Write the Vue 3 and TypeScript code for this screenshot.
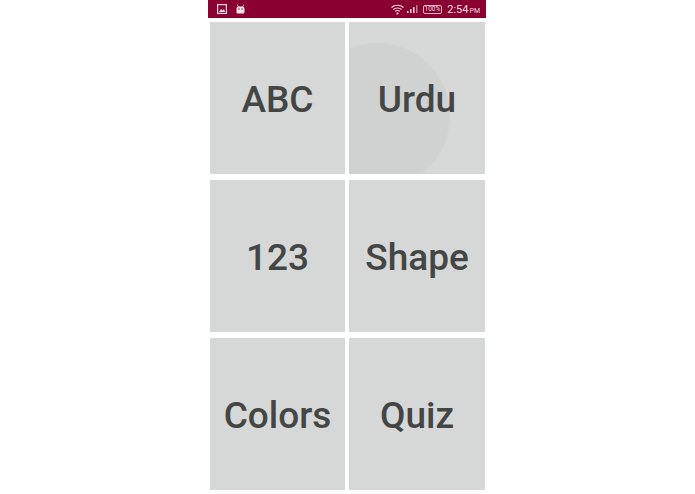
<script setup lang="ts">
const tiles: string[] = ['ABC', 'Urdu', '123', 'Shape', 'Colors', 'Quiz']
</script>

<template>
  <div class="page">
    <div class="phone">
      <div class="status">
        <div class="left">
          <svg class="ic" width="10" height="10" viewBox="0 0 10 10">
            <rect x="0.6" y="0.6" width="8.8" height="8.8" fill="none" stroke="#f1d9e0" stroke-width="1.2" />
            <path d="M2 8l2-3 1.5 1.5L7 5l1 3z" fill="#f1d9e0" />
          </svg>
          <svg class="ic bot" width="11" height="11" viewBox="0 0 11 11">
            <path d="M2.5 0.5l1.2 2h3.6l1.2-2 .5.3-.9 1.9c.9.4 1.4 1.1 1.4 2.1v3.2c0 1-.8 1.5-1.6 1.5H3.1c-.8 0-1.6-.5-1.6-1.5V4.800c0-1 .5-1.7 1.400-2.100L2 .8z" fill="#f7e6eb" />
            <circle cx="4" cy="5" r=".7" fill="#8a0031" />
            <circle cx="7" cy="5" r=".7" fill="#8a0031" />
          </svg>
        </div>
        <div class="right">
          <svg width="13" height="11" viewBox="0 0 13 11" class="wifi">
            <path d="M.5 3.500C3.800.5 9.200.5 12.500 3.500" fill="none" stroke="#f4dfe5" stroke-width="1.200" />
            <path d="M2.400 5.500C4.600 3.500 8.400 3.500 10.600 5.500" fill="none" stroke="#f4dfe5" stroke-width="1.200" />
            <path d="M4.200 7.400C5.400 6.300 7.600 6.300 8.800 7.400" fill="none" stroke="#f4dfe5" stroke-width="1.200" />
            <circle cx="6.500" cy="9.500" r="1.100" fill="#f4dfe5" />
          </svg>
          <svg width="11" height="8" viewBox="0 0 11 8" class="signal">
            <rect x="0" y="6" width="1.500" height="2" fill="#f4dfe5" />
            <rect x="3" y="4" width="1.500" height="4" fill="#f4dfe5" />
            <rect x="6" y="2" width="1.500" height="6" fill="#f4dfe5" />
            <rect x="9" y="0" width="1.500" height="8" fill="#c08096" />
          </svg>
          <span class="battery">100%</span>
          <span class="time">2:54<small>PM</small></span>
        </div>
      </div>
      <div class="grid">
        <div v-for="(t, i) in tiles" :key="t" class="tile">
          <span v-if="i === 1" class="ripple"></span>
          <span class="label">{{ t }}</span>
        </div>
      </div>
    </div>
  </div>
</template>

<style scoped>
.page {
  width: 695px;
  height: 494px;
  background: #fff;
  overflow: hidden;
}
.phone {
  width: 278px;
  margin-left: 208px;
  font-family: Roboto, sans-serif;
}
.status {
  height: 18px;
  background: #8a0031;
  display: flex;
  align-items: center;
  justify-content: space-between;
  padding: 0 6px 0 9px;
  color: #f4dfe5;
}
.left {
  display: flex;
  align-items: center;
  gap: 8px;
}
.right {
  display: flex;
  align-items: center;
}
.wifi {
  margin-right: 3px;
}
.signal {
  margin-right: 5px;
}
.battery {
  font-size: 6.500px;
  line-height: 7px;
  border: 1px solid #e3bcc9;
  border-radius: 2px;
  padding: 0 1px;
  margin-right: 5px;
}
.time {
  font-size: 11px;
  font-weight: 400;
  white-space: nowrap;
}
.time small {
  font-size: 7px;
  margin-left: 1px;
}
.grid {
  display: grid;
  grid-template-columns: 135px 136px;
  grid-auto-rows: 152px;
  column-gap: 4px;
  row-gap: 6px;
  padding: 4px 0 0 2px;
}
.tile {
  position: relative;
  overflow: hidden;
  background: #d6d8d7;
  display: flex;
  align-items: center;
  justify-content: center;
}
.ripple {
  position: absolute;
  left: -45px;
  top: 21px;
  width: 146px;
  height: 146px;
  border-radius: 50%;
  background: #d0d2d1;
}
.label {
  position: relative;
  top: 1px;
  font-size: 37px;
  font-weight: 500;
  color: #444545;
}
</style>
